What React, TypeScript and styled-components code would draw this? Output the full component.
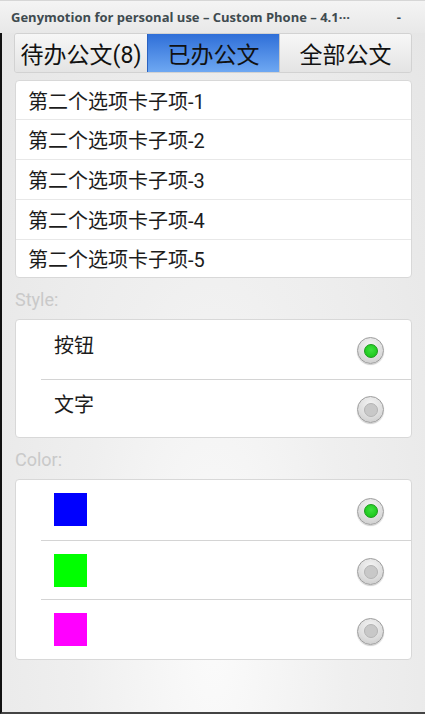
import React from "react";
import styled, { createGlobalStyle } from "styled-components";

const Global = createGlobalStyle`
  html, body { margin: 0; padding: 0; background: #e9e9e9; }
  * { box-sizing: border-box; }
`;

const Window = styled.div`
  width: 425px;
  height: 714px;
  display: flex;
  flex-direction: column;
  overflow: hidden;
  font-family: Roboto, "Noto Sans CJK SC", sans-serif;
`;

const TitleBar = styled.div`
  height: 33px;
  flex: none;
  display: flex;
  align-items: center;
  justify-content: space-between;
  padding: 0 24px 1px 11px;
  background: linear-gradient(#f4f4f4, #e8e8e8);
  border-top: 1px solid #d6d6d6;
  font-family: "Open Sans", "DejaVu Sans", sans-serif;
  font-weight: 700;
  font-size: 13px;
  color: #3f4b50;
`;

const Screen = styled.div`
  flex: 1;
  display: flex;
  flex-direction: column;
  padding: 0 13px 0 12px;
  border-left: 2px solid #111;
  border-bottom: 2px solid #444;
  background: radial-gradient(ellipse at 50% 88%, #fbfbfb 0%, #efefef 45%, #e6e6e6 100%);
`;

const Tabs = styled.div`
  display: grid;
  grid-template-columns: 1fr 1fr 1fr;
  height: 40px;
  border-radius: 3px;
  overflow: hidden;
  border: 1px solid #d2d2d2;
`;

const Tab = styled.div<{ $active?: boolean }>`
  display: flex;
  align-items: center;
  justify-content: center;
  font-size: 23px;
  color: #111;
  background: ${(p) =>
    p.$active
      ? "linear-gradient(#2f6fd8, #6ea8f2)"
      : "linear-gradient(#f7f7f7, #e4e4e4)"};
  border-left: ${(p) => (p.$active ? "1px solid #2a62c0" : "1px solid #c8c8c8")};
  &:first-child { border-left: none; }
`;

const Card = styled.div`
  background: #fff;
  border: 1px solid #d8d8d8;
  border-radius: 4px;
  margin-left: 1px;
  display: flex;
  flex-direction: column;
  overflow: hidden;
`;

const ListCard = styled(Card)`
  margin-top: 7px;
`;

const ListRow = styled.div`
  height: 40px;
  display: flex;
  align-items: center;
  padding-left: 12px;
  font-size: 20px;
  color: #1c1c1c;
  border-top: 1px solid #e8e8e8;
  &:first-child { border-top: none; height: 38px; }
  &:last-child { height: 38px; }
`;

const Label = styled.div`
  height: 41px;
  display: flex;
  align-items: center;
  padding-left: 1px;
  padding-top: 2px;
  font-size: 18px;
  color: #c9c9c9;
`;

const OptRow = styled.div<{ $h: number }>`
  height: ${(p) => p.$h}px;
  display: flex;
  align-items: center;
  padding-left: 38px;
  padding-right: 27px;
  font-size: 20px;
  color: #1c1c1c;
  & + & { border-top: 1px solid #d4d4d4; margin-left: 25px; padding-left: 13px; }
`;

const OptText = styled.div`
  flex: 1;
  margin-top: -10px;
`;

const Swatch = styled.div<{ $c: string }>`
  width: 33px;
  height: 33px;
  background: ${(p) => p.$c};
`;

const Spacer = styled.div`
  flex: 1;
`;

const Radio = styled.div<{ $on?: boolean }>`
  width: 27px;
  height: 27px;
  border-radius: 50%;
  margin-top: 3px;
  background: radial-gradient(circle at 50% 30%, #f4f4f4 0%, #dcdcdc 60%, #c6c6c6 100%);
  border: 1px solid #9c9c9c;
  box-shadow: 0 1px 1px rgba(0,0,0,0.2);
  display: flex;
  align-items: center;
  justify-content: center;
  &::after {
    content: "";
    width: 12px;
    height: 12px;
    border-radius: 50%;
    background: ${(p) => (p.$on ? "radial-gradient(circle at 50% 40%, #3ee03e, #12c012)" : "#c8c8c8")};
    border: 1px solid ${(p) => (p.$on ? "#1a9a1a" : "#b4b4b4")};
  }
`;

export default function App() {
  const items = [1, 2, 3, 4, 5];
  return (
    <Window>
      <Global />
      <TitleBar>
        <span>Genymotion for personal use – Custom Phone – 4.1···</span>
        <span>-</span>
      </TitleBar>
      <Screen>
        <Tabs>
          <Tab>待办公文(8)</Tab>
          <Tab $active>已办公文</Tab>
          <Tab>全部公文</Tab>
        </Tabs>
        <ListCard>
          {items.map((i) => (
            <ListRow key={i}>第二个选项卡子项-{i}</ListRow>
          ))}
        </ListCard>
        <Label>Style:</Label>
        <Card>
          <OptRow $h={58.5}>
            <OptText>按钮</OptText>
            <Radio $on />
          </OptRow>
          <OptRow $h={58.5}>
            <OptText>文字</OptText>
            <Radio />
          </OptRow>
        </Card>
        <Label>Color:</Label>
        <Card>
          <OptRow $h={59.7}>
            <Swatch $c="#0000ff" />
            <Spacer />
            <Radio $on />
          </OptRow>
          <OptRow $h={59.7}>
            <Swatch $c="#00ff00" />
            <Spacer />
            <Radio />
          </OptRow>
          <OptRow $h={59.7}>
            <Swatch $c="#ff00ff" />
            <Spacer />
            <Radio />
          </OptRow>
        </Card>
      </Screen>
    </Window>
  );
}
